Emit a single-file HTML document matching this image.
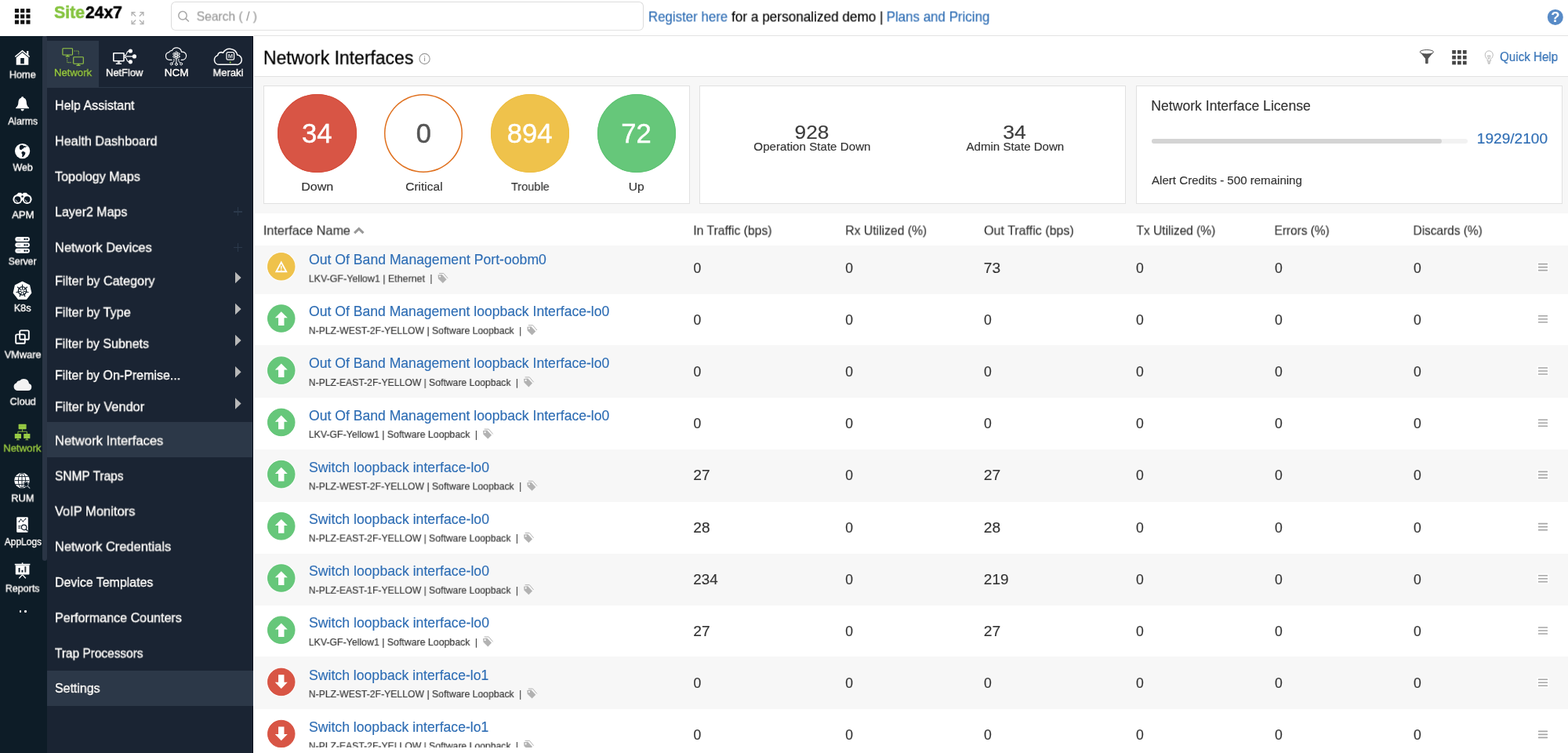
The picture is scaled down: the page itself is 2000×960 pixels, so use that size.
<!DOCTYPE html>
<html lang="en"><head><meta charset="utf-8"><title>Network Interfaces - Site24x7</title>
<style>
*{box-sizing:border-box}
html,body{margin:0;padding:0;overflow:hidden}
body{width:2000px;height:960px;overflow:hidden;position:relative;background:#fff;font-family:"Liberation Sans",sans-serif;color:#333}
.t{position:absolute;white-space:pre;display:block;transform-origin:0 0;will-change:transform;-webkit-text-stroke:0.16px currentColor}
.b{position:absolute;display:block}
svg{position:absolute;display:block;overflow:visible}
.w{color:#fff}
</style></head>
<body>
<!-- top bar -->
<div class="b" style="left:0px;top:0px;width:2000px;height:46px;background:#fff;"></div>
<div class="b" style="left:324px;top:45px;width:1676px;height:1px;background:#e3e3e3;"></div>
<svg style="left:18px;top:11px;" width="21" height="20" viewBox="0 0 21 20"><g transform="translate(0.90 0.10)"><rect x="0.00" y="0.00" width="5.1" height="5.1" fill="#111"/><rect x="7.25" y="0.00" width="5.1" height="5.1" fill="#111"/><rect x="14.50" y="0.00" width="5.1" height="5.1" fill="#111"/><rect x="0.00" y="7.25" width="5.1" height="5.1" fill="#111"/><rect x="7.25" y="7.25" width="5.1" height="5.1" fill="#111"/><rect x="14.50" y="7.25" width="5.1" height="5.1" fill="#111"/><rect x="0.00" y="14.50" width="5.1" height="5.1" fill="#111"/><rect x="7.25" y="14.50" width="5.1" height="5.1" fill="#111"/><rect x="14.50" y="14.50" width="5.1" height="5.1" fill="#111"/></g></svg>
<span class="t" style="left:69px;top:3px;font-size:22.6px;line-height:25px;color:#86c440;transform:translate(0.09px,0.10px) scaleX(0.9397);font-weight:700;-webkit-text-stroke:0.55px #86c440;">Site</span>
<span class="t" style="left:109px;top:3px;font-size:22.6px;line-height:25px;color:#000;transform:translate(0.07px,0.10px) scaleX(0.9281);font-weight:700;-webkit-text-stroke:0.55px #000;">24x7</span>
<svg style="left:167px;top:14px;" width="17" height="18" viewBox="0 0 17 18"><g transform="translate(0.20 0.80) scale(1.0000 1.0000) translate(-0.0 -0.0)"><g fill="none" stroke="#b4b4b4" stroke-width="1.4" stroke-linecap="butt" stroke-linejoin="miter"><path d="M0.9 5.4V0.9H5.4M1.2 1.2L6 6"/><path d="M11.2 0.9H15.7V5.4M15.4 1.2L10.6 6"/><path d="M0.9 11.2V15.7H5.4M1.2 15.4L6 10.6"/><path d="M11.2 15.7H15.7V11.2M15.4 15.4L10.6 10.6"/></g></g></svg>
<div class="b" style="left:218px;top:2px;width:602.5px;height:36.5px;background:#fff;border:1px solid #dcdcdc;border-bottom-color:#e2e2e2;border-radius:6px;"></div>
<svg style="left:227px;top:13px;" width="14" height="15" viewBox="0 0 14 15"><circle cx="6" cy="6.8" r="5.2" fill="none" stroke="#a9a9a9" stroke-width="1.5"/><path d="M9.8 10.6L13.4 14" stroke="#a9a9a9" stroke-width="1.7" stroke-linecap="round"/></svg>
<span class="t" style="left:250px;top:11px;font-size:16.5px;line-height:18px;color:#9a9a9a;transform:translate(0.69px,0.50px) scaleX(0.9470);">Search ( / )</span>
<span class="t" style="left:826px;top:11px;font-size:17.5px;line-height:20px;color:#2e6db4;transform:translate(0.92px,0.50px) scaleX(0.9646);">Register here</span>
<span class="t" style="left:933px;top:11px;font-size:17.5px;line-height:20px;color:#000;transform:translate(0.06px,0.50px) scaleX(0.9813);">for a personalized demo |</span>
<span class="t" style="left:1130px;top:11px;font-size:17.5px;line-height:20px;color:#2e6db4;transform:translate(0.66px,0.50px) scaleX(0.9669);">Plans and Pricing</span>
<svg style="left:1973px;top:11px;will-change:transform;" width="21" height="21" viewBox="0 0 21 21"><g transform="translate(0.80 0.90)"><circle cx="10" cy="10" r="10" fill="#588bc7"/><text x="10" y="16.4" text-anchor="middle" font-family="Liberation Sans, sans-serif" font-weight="700" font-size="18.5" fill="#fff">?</text></g></svg>
<!-- left rail -->
<div class="b" style="left:0px;top:46px;width:60px;height:914px;background:#0d1c27;"></div>
<div class="b" style="left:54px;top:46px;width:6px;height:669px;background:#2a3545;border-radius:2px 2px 3px 3px;"></div>
<svg style="left:18px;top:63px;" width="21" height="20" viewBox="0 0 21 20"><g transform="translate(0.70 0.60)"><path d="M9.8 0.2 L0.2 8.2 L1.1 9.3 L9.8 2.1 L18.5 9.3 L19.4 8.2 L17.6 6.7 V1.4 H15.4 V4.9 Z" fill="#fff"/><path d="M9.8 3.5 L2 9.9 V19.2 H17.6 V9.9 Z M7.5 10.4 H12.1 V17.7 H7.5 Z" fill="#fff" fill-rule="evenodd"/></g></svg>
<span class="t" style="left:11px;top:87px;font-size:13.2px;line-height:15px;color:#fff;transform:translate(0.75px,0.50px) scaleX(0.9684);text-shadow:0 0 1px rgba(0,0,0,.9),0 0 2px rgba(0,0,0,.5);-webkit-text-stroke:0.4px currentColor;">Home</span>
<svg style="left:20px;top:123px;" width="18" height="19" viewBox="0 0 18 19"><path d="M8.6 0.3 C9.6 0.3 10.2 1 10.2 1.8 C12.6 2.6 13.7 4.7 13.8 7.4 C13.9 10.8 14.9 12.6 17 14.2 V15.2 H0.2 V14.2 C2.3 12.6 3.3 10.8 3.4 7.4 C3.5 4.7 4.6 2.6 7 1.8 C7 1 7.6 0.3 8.6 0.3 Z" fill="#fff"/><path d="M6.6 16 H10.6 C10.6 17.4 9.8 18.4 8.6 18.4 C7.4 18.4 6.6 17.4 6.6 16 Z" fill="#fff"/></svg>
<span class="t" style="left:10px;top:146px;font-size:13.2px;line-height:15px;color:#fff;transform:translate(0.28px,0.75px) scaleX(0.9179);text-shadow:0 0 1px rgba(0,0,0,.9),0 0 2px rgba(0,0,0,.5);-webkit-text-stroke:0.4px currentColor;">Alarms</span>
<svg style="left:18px;top:182px;" width="21" height="21" viewBox="0 0 21 21"><g transform="translate(0.70 0.70)"><circle cx="9.9" cy="9.9" r="9.6" fill="#fff"/><path d="M6.4 3.2 L8.2 2 L10.6 2.4 L11.4 3.6 L13 3 L14.8 4.6 L13.4 5.4 L12.2 4.8 L11.6 6.2 L9.6 7.2 L8.6 8.6 L6.8 8 L6 6 Z" fill="#0d1b27"/><path d="M9.4 10.6 L11.6 10.2 L13.8 12 L13.2 14.2 L10.6 17.6 L9.4 17.4 L9.8 14.4 L8.6 12.4 Z" fill="#0d1b27"/><path d="M14.6 2.8 L16 3.6 L15.4 4.6 Z" fill="#0d1b27"/></g></svg>
<span class="t" style="left:16px;top:205px;font-size:13.2px;line-height:15px;color:#fff;transform:translate(0.50px,0.75px) scaleX(0.9404);text-shadow:0 0 1px rgba(0,0,0,.9),0 0 2px rgba(0,0,0,.5);-webkit-text-stroke:0.4px currentColor;">Web</span>
<svg style="left:16px;top:245px;" width="25" height="16" viewBox="0 0 25 16"><g transform="translate(0.20 0.40)"><path d="M7.2 0.3 H10.5 L12.3 1.9 L14.1 0.3 H17.4 L21 4 L12.3 10 L3.6 4 Z" fill="#fff"/><circle cx="6.2" cy="8.6" r="6" fill="#fff"/><circle cx="18.4" cy="8.6" r="6" fill="#fff"/><circle cx="6.2" cy="8.8" r="3.9" fill="#0d1b27"/><circle cx="18.4" cy="8.8" r="3.9" fill="#0d1b27"/><circle cx="12.3" cy="5.1" r="1.25" fill="#0d1b27"/><path d="M3.7 9 A2.6 2.6 0 0 0 6.6 11.5" fill="none" stroke="#fff" stroke-width="0.8"/><path d="M15.9 9 A2.6 2.6 0 0 0 18.8 11.5" fill="none" stroke="#fff" stroke-width="0.8"/></g></svg>
<span class="t" style="left:15px;top:266px;font-size:13.2px;line-height:15px;color:#fff;transform:translate(0.27px,0.25px) scaleX(0.9902);text-shadow:0 0 1px rgba(0,0,0,.9),0 0 2px rgba(0,0,0,.5);-webkit-text-stroke:0.4px currentColor;">APM</span>
<svg style="left:19px;top:301px;" width="20" height="23" viewBox="0 0 20 23"><g transform="translate(0.00 0.60)"><rect x="0.3" y="0.3" width="18.6" height="6" rx="3" fill="#fff"/><rect x="2.8" y="2.9" width="4.4" height="0.9" fill="#9aa3ab"/><circle cx="12.6" cy="3.3" r="1.2" fill="#0d1b27"/><circle cx="15.6" cy="3.3" r="1.2" fill="#0d1b27"/><rect x="0.3" y="7.75" width="18.6" height="6" rx="3" fill="#fff"/><rect x="2.8" y="10.35" width="4.4" height="0.9" fill="#9aa3ab"/><circle cx="12.6" cy="10.75" r="1.2" fill="#0d1b27"/><circle cx="15.6" cy="10.75" r="1.2" fill="#0d1b27"/><rect x="0.3" y="15.200000000000001" width="18.6" height="6" rx="3" fill="#fff"/><rect x="2.8" y="17.8" width="4.4" height="0.9" fill="#9aa3ab"/><circle cx="12.6" cy="18.2" r="1.2" fill="#0d1b27"/><circle cx="15.6" cy="18.2" r="1.2" fill="#0d1b27"/></g></svg>
<span class="t" style="left:10px;top:325px;font-size:13.2px;line-height:15px;color:#fff;transform:translate(0.75px,0.50px) scaleX(0.9192);text-shadow:0 0 1px rgba(0,0,0,.9),0 0 2px rgba(0,0,0,.5);-webkit-text-stroke:0.4px currentColor;">Server</span>
<svg style="left:16px;top:358px;" width="25" height="25" viewBox="0 0 25 25"><g transform="translate(0.50 0.20)"><polygon points="12.00,1.20 20.99,5.53 23.21,15.26 16.99,23.06 7.01,23.06 0.79,15.26 3.01,5.53" fill="#fff" stroke="#fff" stroke-width="1.2" stroke-linejoin="round"/><circle cx="12" cy="12.7" r="5.2" fill="none" stroke="#0d1b27" stroke-width="1.3"/><line x1="12.00" y1="11.40" x2="12.00" y2="4.50" stroke="#0d1b27" stroke-width="1.1"/><line x1="13.02" y1="11.89" x2="18.41" y2="7.59" stroke="#0d1b27" stroke-width="1.1"/><line x1="13.27" y1="12.99" x2="19.99" y2="14.52" stroke="#0d1b27" stroke-width="1.1"/><line x1="12.56" y1="13.87" x2="15.56" y2="20.09" stroke="#0d1b27" stroke-width="1.1"/><line x1="11.44" y1="13.87" x2="8.44" y2="20.09" stroke="#0d1b27" stroke-width="1.1"/><line x1="10.73" y1="12.99" x2="4.01" y2="14.52" stroke="#0d1b27" stroke-width="1.1"/><line x1="10.98" y1="11.89" x2="5.59" y2="7.59" stroke="#0d1b27" stroke-width="1.1"/><circle cx="12" cy="12.7" r="1" fill="#fff"/></g></svg>
<span class="t" style="left:17px;top:385px;font-size:13.2px;line-height:15px;color:#fff;transform:translate(0.77px,0.00px) scaleX(0.9544);text-shadow:0 0 1px rgba(0,0,0,.9),0 0 2px rgba(0,0,0,.5);-webkit-text-stroke:0.4px currentColor;">K8s</span>
<svg style="left:19px;top:420px;" width="19" height="19" viewBox="0 0 19 19"><g transform="translate(0.60 0.40)"><rect x="5.6" y="1" width="11.6" height="11.4" rx="1.6" fill="none" stroke="#fff" stroke-width="1.9"/><rect x="0.6" y="6" width="11.6" height="11.4" rx="1.6" fill="none" stroke="#fff" stroke-width="1.9"/></g></svg>
<span class="t" style="left:5px;top:444px;font-size:13.2px;line-height:15px;color:#fff;transform:translate(0.74px,0.50px) scaleX(0.9681);text-shadow:0 0 1px rgba(0,0,0,.9),0 0 2px rgba(0,0,0,.5);-webkit-text-stroke:0.4px currentColor;">VMware</span>
<svg style="left:16px;top:481px;" width="25" height="18" viewBox="0 0 25 18"><g transform="translate(0.60 0.60)"><path d="M5.4 16.4 A5 5 0 0 1 4.4 6.7 A4.4 4.4 0 0 1 8.6 3.6 A6.8 6.8 0 0 1 20.4 7.4 A4.6 4.6 0 0 1 19.2 16.4 Z" fill="#f3f3f3"/></g></svg>
<span class="t" style="left:12px;top:504px;font-size:13.2px;line-height:15px;color:#fff;transform:translate(0.65px,0.25px) scaleX(0.9625);text-shadow:0 0 1px rgba(0,0,0,.9),0 0 2px rgba(0,0,0,.5);-webkit-text-stroke:0.4px currentColor;">Cloud</span>
<svg style="left:18px;top:540px;" width="21" height="22" viewBox="0 0 21 22"><g transform="translate(0.60 0.40)"><rect x="5" y="0.4" width="10" height="6.4" rx="0.6" fill="#98cb45"/><rect x="5.8" y="2.4" width="8.4" height="0.7" fill="#7fae37"/><rect x="0.2" y="12.6" width="8.2" height="6" rx="0.6" fill="#98cb45"/><rect x="11.6" y="12.6" width="8.2" height="6" rx="0.6" fill="#98cb45"/><path d="M10 6.8 V9.8 M4.3 12.6 V9.8 H15.7 V12.6" fill="none" stroke="#98cb45" stroke-width="0.9"/><path d="M4.3 18.6 V20 M2.4 20.3 H6.2 M15.7 18.6 V20 M13.8 20.3 H17.6" fill="none" stroke="#98cb45" stroke-width="1"/></g></svg>
<span class="t" style="left:4px;top:563px;font-size:13.2px;line-height:15px;color:#98cb45;transform:translate(0.22px,0.75px) scaleX(0.9979);text-shadow:0 0 1px rgba(0,0,0,.9),0 0 2px rgba(0,0,0,.5);-webkit-text-stroke:0.4px currentColor;">Network</span>
<svg style="left:18px;top:602px;" width="21" height="22" viewBox="0 0 21 22"><g transform="translate(0.00 0.40)"><circle cx="10" cy="10.2" r="9.8" fill="#fff"/><g fill="none" stroke="#0d1b27" stroke-width="0.9"><ellipse cx="10" cy="10.2" rx="4.6" ry="9.6"/><path d="M10 0.6 V19.8 M0.4 10.2 H19.6 M1.8 5.2 H18.2 M1.8 15.2 H18.2"/></g><circle cx="15.2" cy="15" r="3.6" fill="#0d1b27"/><circle cx="15.2" cy="15" r="3" fill="none" stroke="#b8bec4" stroke-width="0.9"/><path d="M17.4 17.4 L20.2 20.2" stroke="#b8bec4" stroke-width="1.2"/></g></svg>
<span class="t" style="left:14px;top:627px;font-size:13.2px;line-height:15px;color:#fff;transform:translate(0.24px,0.50px) scaleX(0.9761);text-shadow:0 0 1px rgba(0,0,0,.9),0 0 2px rgba(0,0,0,.5);-webkit-text-stroke:0.4px currentColor;">RUM</span>
<svg style="left:20px;top:658px;" width="17" height="22" viewBox="0 0 17 22"><g transform="translate(0.80 0.80)"><rect x="0.4" y="0.4" width="14.6" height="19.6" rx="1.2" fill="#fff"/><path d="M3.4 6.4 L5.8 3.4 L8.6 6 L11.8 2.6" fill="none" stroke="#0d1b27" stroke-width="0.9"/><circle cx="3.6" cy="6.3" r="0.8" fill="#0d1b27"/><circle cx="5.8" cy="3.5" r="0.8" fill="#0d1b27"/><circle cx="8.6" cy="6" r="0.8" fill="#0d1b27"/><circle cx="11.8" cy="2.8" r="0.8" fill="#0d1b27"/><path d="M2.4 11.6 H5.8 M2.4 13.1 H5.2 M2.4 14.6 H5.6" stroke="#0d1b27" stroke-width="0.7"/><circle cx="9.8" cy="13.6" r="3.2" fill="#fff" stroke="#0d1b27" stroke-width="1.2"/><path d="M12.2 16 L14.8 18.4" stroke="#0d1b27" stroke-width="1.3"/></g></svg>
<span class="t" style="left:5px;top:683px;font-size:13.2px;line-height:15px;color:#fff;transform:translate(0.78px,0.00px) scaleX(0.9058);text-shadow:0 0 1px rgba(0,0,0,.9),0 0 2px rgba(0,0,0,.5);-webkit-text-stroke:0.4px currentColor;">AppLogs</span>
<svg style="left:18px;top:717px;" width="21" height="21" viewBox="0 0 21 21"><g transform="translate(0.60 0.40)"><rect x="0.2" y="1.4" width="19.6" height="1.6" fill="#fff"/><rect x="9.2" y="0" width="1.6" height="2" fill="#fff"/><path d="M1.2 3 H18.8 V14 Q18.8 15.2 17.6 15.2 H2.4 Q1.2 15.2 1.2 14 Z" fill="#fff"/><rect x="5" y="6.6" width="1.9" height="5.6" fill="#0d1b27"/><rect x="8.9" y="9.4" width="1.9" height="2.8" fill="#0d1b27"/><rect x="12.8" y="4.8" width="1.9" height="7.4" fill="#30383f"/><path d="M10 15.2 L5.8 19.8 M10 15.2 L14.2 19.8" stroke="#fff" stroke-width="1.3" fill="none"/></g></svg>
<span class="t" style="left:6px;top:742px;font-size:13.2px;line-height:15px;color:#fff;transform:translate(0.78px,0.50px) scaleX(0.9459);text-shadow:0 0 1px rgba(0,0,0,.9),0 0 2px rgba(0,0,0,.5);-webkit-text-stroke:0.4px currentColor;">Reports</span>
<div class="b" style="left:24.6px;top:778px;width:2.6px;height:2.6px;background:#fff;border-radius:50%;"></div>
<div class="b" style="left:31px;top:778px;width:2.6px;height:2.6px;background:#fff;border-radius:50%;"></div>
<!-- sidebar -->
<div class="b" style="left:60px;top:46px;width:263.3px;height:914px;background:#1a2433;"></div>
<div class="b" style="left:60px;top:52.3px;width:66px;height:58.5px;background:#2c3848;"></div>
<div class="b" style="left:60px;top:110.5px;width:263.3px;height:1.3px;background:#2b3747;"></div>
<svg style="left:79px;top:61px;" width="29" height="24" viewBox="0 0 29 24"><g transform="translate(0.10 0.00)"><g fill="none" stroke="#98cb45" stroke-width="1.1"><rect x="0.8" y="0.8" width="12.6" height="8.2" rx="0.8"/><rect x="14.6" y="11.8" width="12.6" height="8.4" rx="0.8"/><path d="M7.1 9 V10.4 M4.6 10.9 H9.6 M20.9 20.2 V21.8 M18.4 22.4 H23.4" stroke-width="1.3"/><path d="M15.4 4 H21.2 V9.4" stroke-dasharray="1.1 1.1"/><path d="M6.6 13 V18.6 H12.4" stroke-dasharray="1.1 1.1"/></g></g></svg>
<span class="t" style="left:68px;top:85px;font-size:13.2px;line-height:15px;color:#98cb45;transform:translate(0.98px,0.00px) scaleX(0.9926);text-shadow:0 0 1px rgba(0,0,0,.9),0 0 2px rgba(0,0,0,.5);-webkit-text-stroke:0.4px currentColor;">Network</span>
<svg style="left:143px;top:63px;" width="31" height="20" viewBox="0 0 31 20"><g transform="translate(0.60 0.10)"><g fill="none" stroke="#fff"><rect x="1.2" y="4.6" width="13.2" height="10" rx="0.5" stroke-width="1.6"/><path d="M15.2 8.8 H25.6" stroke-width="1.5" opacity="0.85"/><path d="M15.2 7.3 H16.2 C18.6 7.3 17.6 1.9 20.6 1.9 M15.2 10.3 H16.2 C18.6 10.3 17.6 15.7 20.6 15.7" stroke-width="1.1"/><path d="M7.8 15.4 V17.4" stroke-width="3"/><path d="M4.2 18.2 H11.4" stroke-width="1.4"/></g><circle cx="22.8" cy="1.9" r="2.6" fill="#fff"/><circle cx="27.8" cy="8.8" r="2.6" fill="#fff"/><circle cx="22.8" cy="15.7" r="2.6" fill="#fff"/></g></svg>
<span class="t" style="left:134px;top:85px;font-size:13.2px;line-height:15px;color:#fff;transform:translate(0.99px,0.00px) scaleX(0.9817);text-shadow:0 0 1px rgba(0,0,0,.9),0 0 2px rgba(0,0,0,.5);-webkit-text-stroke:0.4px currentColor;">NetFlow</span>
<svg style="left:210px;top:60px;" width="30" height="24" viewBox="0 0 30 24"><g transform="translate(0.20 0.50) scale(0.9800 0.9792) translate(-0.0 -0.0)"><g fill="none" stroke="#fff" stroke-width="1.2" stroke-linecap="round"><path d="M9 16.2 H6 A5 5 0 0 1 5.4 6.3 A4.4 4.4 0 0 1 9.4 4 A6.6 6.6 0 0 1 21.8 5.8 A5.2 5.2 0 0 1 23.6 16.2 H21.4"/><path d="M15 14.6 V20 M12 15.2 V17.6 Q12 18.6 11 19 L9.8 19.8 M18 15.2 V17.6 Q18 18.6 19 19 L20.2 19.8" stroke-width="1"/><circle cx="8.6" cy="21.4" r="1.5" stroke-width="1"/><circle cx="15" cy="21.8" r="1.5" stroke-width="1"/><circle cx="21.4" cy="21.4" r="1.5" stroke-width="1"/><circle cx="15" cy="10.2" r="1.5" stroke-width="1"/><circle cx="17.94" cy="11.90" r="1.35" stroke-width="0.9"/><circle cx="15.00" cy="13.60" r="1.35" stroke-width="0.9"/><circle cx="12.06" cy="11.90" r="1.35" stroke-width="0.9"/><circle cx="12.06" cy="8.50" r="1.35" stroke-width="0.9"/><circle cx="15.00" cy="6.80" r="1.35" stroke-width="0.9"/><circle cx="17.94" cy="8.50" r="1.35" stroke-width="0.9"/></g></g></svg>
<span class="t" style="left:209px;top:85px;font-size:13.2px;line-height:15px;color:#fff;transform:translate(0.68px,0.00px) scaleX(1.0299);text-shadow:0 0 1px rgba(0,0,0,.9),0 0 2px rgba(0,0,0,.5);-webkit-text-stroke:0.4px currentColor;">NCM</span>
<svg style="left:273px;top:61px;will-change:transform;" width="36" height="23" viewBox="0 0 36 23"><g transform="translate(0.10 0.60)"><g fill="none" stroke="#fff" stroke-width="1.5" stroke-linejoin="round"><path d="M6.6 20.75 A6.1 6.1 0 0 1 4.6 8.84 A4.4 4.4 0 0 1 11.4 5.8 A9.8 9.8 0 0 1 29.6 8.5 A6.15 6.15 0 0 1 28.4 20.75 Z"/><rect x="15.9" y="5" width="9.6" height="9.6" rx="1.9" stroke-width="1.2"/></g><text x="20.7" y="12.5" text-anchor="middle" font-family="Liberation Sans, sans-serif" font-size="7.6" font-weight="700" fill="#d0d4d8">M</text><circle cx="20.6" cy="17.9" r="1" fill="#8ed13c"/></g></svg>
<span class="t" style="left:271px;top:85px;font-size:13.2px;line-height:15px;color:#fff;transform:translate(0.49px,0.00px) scaleX(0.9828);text-shadow:0 0 1px rgba(0,0,0,.9),0 0 2px rgba(0,0,0,.5);-webkit-text-stroke:0.4px currentColor;">Meraki</span>
<div class="b" style="left:60px;top:538px;width:263.3px;height:45px;background:#2c3848;"></div>
<div class="b" style="left:322.2px;top:46px;width:1px;height:914px;background:#070e1a;"></div>
<div class="b" style="left:60px;top:46px;width:263.3px;height:1px;background:#0a1220;"></div>
<div class="b" style="left:60px;top:855px;width:263.3px;height:44.5px;background:#2c3848;"></div>
<span class="t" style="left:70px;top:125px;font-size:16.9px;line-height:19px;color:#fff;transform:translate(0.02px,0.00px) scaleX(0.9480);text-shadow:0 0 1px rgba(0,0,0,.9),0 0 2px rgba(0,0,0,.5);-webkit-text-stroke:0.4px currentColor;">Help Assistant</span>
<span class="t" style="left:70px;top:170px;font-size:16.9px;line-height:19px;color:#fff;transform:translate(0.01px,0.50px) scaleX(0.9588);text-shadow:0 0 1px rgba(0,0,0,.9),0 0 2px rgba(0,0,0,.5);-webkit-text-stroke:0.4px currentColor;">Health Dashboard</span>
<span class="t" style="left:69px;top:215px;font-size:16.9px;line-height:19px;color:#fff;transform:translate(0.97px,0.75px) scaleX(0.9583);text-shadow:0 0 1px rgba(0,0,0,.9),0 0 2px rgba(0,0,0,.5);-webkit-text-stroke:0.4px currentColor;">Topology Maps</span>
<span class="t" style="left:70px;top:260px;font-size:16.9px;line-height:19px;color:#fff;transform:translate(0.03px,0.75px) scaleX(0.9453);text-shadow:0 0 1px rgba(0,0,0,.9),0 0 2px rgba(0,0,0,.5);-webkit-text-stroke:0.4px currentColor;">Layer2 Maps</span>
<div class="b" style="left:298px;top:269.34999999999997px;width:11px;height:1.2px;background:#2b394b;"></div>
<div class="b" style="left:302.9px;top:264.45px;width:1.2px;height:11px;background:#2b394b;"></div>
<span class="t" style="left:69px;top:306px;font-size:16.9px;line-height:19px;color:#fff;transform:translate(0.98px,0.25px) scaleX(0.9775);text-shadow:0 0 1px rgba(0,0,0,.9),0 0 2px rgba(0,0,0,.5);-webkit-text-stroke:0.4px currentColor;">Network Devices</span>
<div class="b" style="left:298px;top:314.84999999999997px;width:11px;height:1.2px;background:#2b394b;"></div>
<div class="b" style="left:302.9px;top:309.95px;width:1.2px;height:11px;background:#2b394b;"></div>
<span class="t" style="left:70px;top:348px;font-size:16.9px;line-height:19px;color:#fff;transform:translate(0.01px,0.75px) scaleX(0.9567);text-shadow:0 0 1px rgba(0,0,0,.9),0 0 2px rgba(0,0,0,.5);-webkit-text-stroke:0.4px currentColor;">Filter by Category</span>
<svg style="left:300px;top:346px;" width="8" height="16" viewBox="0 0 8 16"><g transform="translate(0.00 0.85)"><path d="M0 0 L7.6 7.2 L0 14.4 Z" fill="#b9b9b9"/></g></svg>
<span class="t" style="left:70px;top:388px;font-size:16.9px;line-height:19px;color:#fff;transform:translate(0.01px,0.75px) scaleX(0.9564);text-shadow:0 0 1px rgba(0,0,0,.9),0 0 2px rgba(0,0,0,.5);-webkit-text-stroke:0.4px currentColor;">Filter by Type</span>
<svg style="left:300px;top:386px;" width="8" height="16" viewBox="0 0 8 16"><g transform="translate(0.00 0.85)"><path d="M0 0 L7.6 7.2 L0 14.4 Z" fill="#b9b9b9"/></g></svg>
<span class="t" style="left:70px;top:428px;font-size:16.9px;line-height:19px;color:#fff;transform:translate(0.02px,0.75px) scaleX(0.9473);text-shadow:0 0 1px rgba(0,0,0,.9),0 0 2px rgba(0,0,0,.5);-webkit-text-stroke:0.4px currentColor;">Filter by Subnets</span>
<svg style="left:300px;top:426px;" width="8" height="16" viewBox="0 0 8 16"><g transform="translate(0.00 0.85)"><path d="M0 0 L7.6 7.2 L0 14.4 Z" fill="#b9b9b9"/></g></svg>
<span class="t" style="left:70px;top:469px;font-size:16.9px;line-height:19px;color:#fff;transform:translate(0.02px,0.00px) scaleX(0.9482);text-shadow:0 0 1px rgba(0,0,0,.9),0 0 2px rgba(0,0,0,.5);-webkit-text-stroke:0.4px currentColor;">Filter by On-Premise...</span>
<svg style="left:300px;top:467px;" width="8" height="15" viewBox="0 0 8 15"><g transform="translate(0.00 0.10)"><path d="M0 0 L7.6 7.2 L0 14.4 Z" fill="#b9b9b9"/></g></svg>
<span class="t" style="left:70px;top:509px;font-size:16.9px;line-height:19px;color:#fff;transform:translate(0.00px,0.25px) scaleX(0.9639);text-shadow:0 0 1px rgba(0,0,0,.9),0 0 2px rgba(0,0,0,.5);-webkit-text-stroke:0.4px currentColor;">Filter by Vendor</span>
<svg style="left:300px;top:507px;" width="8" height="15" viewBox="0 0 8 15"><g transform="translate(0.00 0.35)"><path d="M0 0 L7.6 7.2 L0 14.4 Z" fill="#b9b9b9"/></g></svg>
<span class="t" style="left:69px;top:552px;font-size:16.9px;line-height:19px;color:#fff;transform:translate(0.97px,0.50px) scaleX(0.9827);text-shadow:0 0 1px rgba(0,0,0,.9),0 0 2px rgba(0,0,0,.5);-webkit-text-stroke:0.4px currentColor;">Network Interfaces</span>
<span class="t" style="left:70px;top:597px;font-size:16.9px;line-height:19px;color:#fff;transform:translate(0.01px,0.50px) scaleX(0.9168);text-shadow:0 0 1px rgba(0,0,0,.9),0 0 2px rgba(0,0,0,.5);-webkit-text-stroke:0.4px currentColor;">SNMP Traps</span>
<span class="t" style="left:69px;top:642px;font-size:16.9px;line-height:19px;color:#fff;transform:translate(0.95px,0.50px) scaleX(0.9762);text-shadow:0 0 1px rgba(0,0,0,.9),0 0 2px rgba(0,0,0,.5);-webkit-text-stroke:0.4px currentColor;">VoIP Monitors</span>
<span class="t" style="left:69px;top:687px;font-size:16.9px;line-height:19px;color:#fff;transform:translate(0.99px,0.50px) scaleX(0.9739);text-shadow:0 0 1px rgba(0,0,0,.9),0 0 2px rgba(0,0,0,.5);-webkit-text-stroke:0.4px currentColor;">Network Credentials</span>
<span class="t" style="left:70px;top:733px;font-size:16.9px;line-height:19px;color:#fff;transform:translate(0.03px,0.00px) scaleX(0.9418);text-shadow:0 0 1px rgba(0,0,0,.9),0 0 2px rgba(0,0,0,.5);-webkit-text-stroke:0.4px currentColor;">Device Templates</span>
<span class="t" style="left:70px;top:778px;font-size:16.9px;line-height:19px;color:#fff;transform:translate(0.02px,0.25px) scaleX(0.9523);text-shadow:0 0 1px rgba(0,0,0,.9),0 0 2px rgba(0,0,0,.5);-webkit-text-stroke:0.4px currentColor;">Performance Counters</span>
<span class="t" style="left:69px;top:823px;font-size:16.9px;line-height:19px;color:#fff;transform:translate(0.98px,0.50px) scaleX(0.9132);text-shadow:0 0 1px rgba(0,0,0,.9),0 0 2px rgba(0,0,0,.5);-webkit-text-stroke:0.4px currentColor;">Trap Processors</span>
<span class="t" style="left:69px;top:868px;font-size:16.9px;line-height:19px;color:#fff;transform:translate(0.99px,0.00px) scaleX(0.9435);text-shadow:0 0 1px rgba(0,0,0,.9),0 0 2px rgba(0,0,0,.5);-webkit-text-stroke:0.4px currentColor;">Settings</span>
<!-- page header -->
<span class="t" style="left:335px;top:60px;font-size:23.5px;line-height:26px;color:#000;transform:translate(0.92px,0.80px) scaleX(0.9771);-webkit-text-stroke:0.3px #000;">Network Interfaces</span>
<svg style="left:534px;top:67px;" width="16" height="16" viewBox="0 0 16 16"><g transform="translate(0.00 0.40)"><circle cx="7.6" cy="7.6" r="6.6" fill="none" stroke="#9a9a9a" stroke-width="1.1"/><rect x="7.05" y="6.0" width="1.1" height="4.6" fill="#9a9a9a"/><rect x="7.05" y="3.8" width="1.1" height="1.2" fill="#9a9a9a"/></g></svg>
<svg style="left:1810px;top:63px;" width="19" height="19" viewBox="0 0 19 19"><g transform="translate(0.75 0.25)"><path d="M0.4 3 L7.3 11.6 V17 Q7.3 17.9 8.2 17.9 H10 Q10.9 17.9 10.9 17 V11.6 L17.8 3 Z" fill="#555"/><ellipse cx="9.1" cy="3" rx="8.6" ry="2.7" fill="#fff" stroke="#444" stroke-width="0.9"/></g></svg>
<svg style="left:1852px;top:64px;" width="19" height="19" viewBox="0 0 19 19"><g transform="translate(0.20 0.00)"><rect x="0.00" y="0.00" width="4.7" height="4.7" fill="#454545"/><rect x="6.85" y="0.00" width="4.7" height="4.7" fill="#454545"/><rect x="13.70" y="0.00" width="4.7" height="4.7" fill="#454545"/><rect x="0.00" y="6.85" width="4.7" height="4.7" fill="#454545"/><rect x="6.85" y="6.85" width="4.7" height="4.7" fill="#454545"/><rect x="13.70" y="6.85" width="4.7" height="4.7" fill="#454545"/><rect x="0.00" y="13.70" width="4.7" height="4.7" fill="#454545"/><rect x="6.85" y="13.70" width="4.7" height="4.7" fill="#454545"/><rect x="13.70" y="13.70" width="4.7" height="4.7" fill="#454545"/></g></svg>
<svg style="left:1893px;top:64px;" width="12" height="18" viewBox="0 0 12 18"><g transform="translate(0.75 0.25)"><g fill="none" stroke="#b0b0b0" stroke-width="0.9"><path d="M3.4 11.4 C1.6 9.6 0.5 7.8 0.5 5.6 A5 5 0 0 1 10.5 5.6 C10.5 7.8 9.4 9.6 7.6 11.4 V13.6 H3.4 Z"/><path d="M3.6 14.8H7.4M3.9 16H7.1M4.6 17.1H6.4"/><path d="M4 6.6 L4.9 11.3 M7 6.6 L6.1 11.3 M3.6 6.8 H7.4"/></g></g></svg>
<span class="t" style="left:1913px;top:63px;font-size:16.5px;line-height:18px;color:#2e6db4;transform:translate(0.08px,0.00px) scaleX(0.9177);">Quick Help</span>
<div class="b" style="left:324px;top:97px;width:1676px;height:1px;background:#e2e2e2;"></div>
<!-- summary -->
<div class="b" style="left:324px;top:98px;width:1676px;height:174px;background:#f7f7f7;"></div>
<div class="b" style="left:336.2px;top:109.2px;width:543.6px;height:150.5px;background:#fff;border:1px solid #e1e1e1;"></div>
<div class="b" style="left:892.2px;top:109.2px;width:544.2px;height:150.5px;background:#fff;border:1px solid #e1e1e1;"></div>
<div class="b" style="left:1449px;top:109.2px;width:544.2px;height:150.5px;background:#fff;border:1px solid #e1e1e1;"></div>
<div class="b" style="left:354.4px;top:119.7px;width:100.2px;height:100.2px;background:#d85545;border-radius:50%;box-shadow:inset 0 0 0 1px #d44a38;"></div>
<span class="t" style="left:385px;top:151px;font-size:34.6px;line-height:38px;color:#fff;transform:translate(0.12px,0.40px);-webkit-text-stroke:0.45px #fff;">34</span>
<span class="t" style="left:384px;top:229px;font-size:15.4px;line-height:17px;color:#333;transform:translate(0.23px,0.00px) scaleX(1.0436);">Down</span>
<div class="b" style="left:490.29999999999995px;top:119.7px;width:100.2px;height:100.2px;background:#fff;border-radius:50%;box-shadow:inset 0 0 0 1.5px #e0711f;"></div>
<span class="t" style="left:530px;top:151px;font-size:34.6px;line-height:38px;color:#555;transform:translate(0.78px,0.40px);-webkit-text-stroke:0.45px #555;">0</span>
<span class="t" style="left:517px;top:229px;font-size:15.4px;line-height:17px;color:#333;transform:translate(0.29px,0.00px) scaleX(1.0052);">Critical</span>
<div class="b" style="left:625.6999999999999px;top:119.7px;width:100.2px;height:100.2px;background:#efc24b;border-radius:50%;box-shadow:inset 0 0 0 1px #edbd40;"></div>
<span class="t" style="left:646px;top:151px;font-size:34.6px;line-height:38px;color:#fff;transform:translate(0.71px,0.40px);-webkit-text-stroke:0.45px #fff;">894</span>
<span class="t" style="left:651px;top:229px;font-size:15.4px;line-height:17px;color:#333;transform:translate(0.90px,0.00px) scaleX(0.9480);">Trouble</span>
<div class="b" style="left:761.5px;top:119.7px;width:100.2px;height:100.2px;background:#66c77a;border-radius:50%;box-shadow:inset 0 0 0 1px #5cc271;"></div>
<span class="t" style="left:792px;top:151px;font-size:34.6px;line-height:38px;color:#fff;transform:translate(0.35px,0.40px);-webkit-text-stroke:0.45px #fff;">72</span>
<span class="t" style="left:801px;top:229px;font-size:15.4px;line-height:17px;color:#333;transform:translate(0.69px,0.00px) scaleX(1.0202);">Up</span>
<span class="t" style="left:1013px;top:155px;font-size:24.8px;line-height:27px;color:#3c3c3c;transform:translate(0.54px,0.00px) scaleX(1.0592);">928</span>
<span class="t" style="left:961px;top:179px;font-size:14.4px;line-height:16px;color:#333;transform:translate(0.36px,0.00px) scaleX(1.0534);">Operation State Down</span>
<span class="t" style="left:1279px;top:155px;font-size:24.8px;line-height:27px;color:#3c3c3c;transform:translate(0.29px,0.00px) scaleX(1.0691);">34</span>
<span class="t" style="left:1232px;top:179px;font-size:14.4px;line-height:16px;color:#333;transform:translate(0.52px,0.00px) scaleX(1.0464);">Admin State Down</span>
<span class="t" style="left:1468px;top:125px;font-size:17.6px;line-height:20px;color:#333;transform:translate(0.35px,0.25px);">Network Interface License</span>
<div class="b" style="left:1469px;top:177px;width:402.75px;height:6.2px;background:#f2f2f2;border-radius:3.1px;"></div>
<div class="b" style="left:1469px;top:177px;width:369.75px;height:6.2px;background:#d4d4d4;border-radius:3.1px;"></div>
<span class="t" style="left:1883px;top:167px;font-size:18px;line-height:20px;color:#2e6db4;transform:translate(0.85px,0.00px) scaleX(1.0595);">1929/2100</span>
<span class="t" style="left:1469px;top:221px;font-size:14.4px;line-height:16px;color:#333;transform:translate(0.07px,0.50px) scaleX(1.0472);">Alert Credits - 500 remaining</span>
<!-- table -->
<span class="t" style="left:335px;top:284px;font-size:16.5px;line-height:18px;color:#333;transform:translate(0.80px,0.50px) scaleX(0.9856);">Interface Name</span>
<svg style="left:451px;top:289px;" width="14" height="10" viewBox="0 0 14 10"><g transform="translate(0.00 0.50)"><path d="M0 6.6 L6.8 0 L13.6 6.6 L11.4 8.8 L6.8 4.3 L2.2 8.8 Z" fill="#999"/></g></svg>
<span class="t" style="left:884px;top:284px;font-size:16.5px;line-height:18px;color:#333;transform:translate(0.35px,0.50px) scaleX(0.9519);">In Traffic (bps)</span>
<span class="t" style="left:1078px;top:284px;font-size:16.5px;line-height:18px;color:#333;transform:translate(0.26px,0.50px) scaleX(0.9530);">Rx Utilized (%)</span>
<span class="t" style="left:1255px;top:284px;font-size:16.5px;line-height:18px;color:#333;transform:translate(0.04px,0.50px) scaleX(0.9719);">Out Traffic (bps)</span>
<span class="t" style="left:1449px;top:284px;font-size:16.5px;line-height:18px;color:#333;transform:translate(0.45px,0.50px) scaleX(0.9408);">Tx Utilized (%)</span>
<span class="t" style="left:1625px;top:284px;font-size:16.5px;line-height:18px;color:#333;transform:translate(0.54px,0.50px) scaleX(0.9315);">Errors (%)</span>
<span class="t" style="left:1802px;top:284px;font-size:16.5px;line-height:18px;color:#333;transform:translate(0.54px,0.50px) scaleX(0.9332);">Discards (%)</span>
<div class="b" style="left:325px;top:313px;width:1675px;height:62px;background:#f7f7f7;"></div>
<svg style="left:338px;top:319px;" width="41" height="41" viewBox="0 0 41 41"><g transform="translate(0.75 0.80)"><circle cx="20" cy="20" r="18.8" fill="#fff" opacity="0.75"/><circle cx="20" cy="20" r="17.3" fill="#efc24b" stroke="#ecbb3c" stroke-width="0.8"/><path d="M20 14.6 L26.4 26.4 H13.6 Z" fill="none" stroke="#fff" stroke-width="1.9" stroke-linejoin="miter"/><rect x="19.3" y="19" width="1.4" height="3.9" fill="#fff"/><rect x="19.3" y="23.7" width="1.4" height="1.3" fill="#fff"/></g></svg>
<span class="t" style="left:393px;top:321px;font-size:17.6px;line-height:20px;color:#2e6db4;transform:translate(0.96px,0.05px) scaleX(1.0026);text-shadow:0 0 1.5px #fff;">Out Of Band Management Port-oobm0</span>
<span class="t" style="left:393px;top:347px;font-size:13.2px;line-height:15px;color:#333;transform:translate(0.68px,0.50px) scaleX(0.9458);text-shadow:0 0 1.5px #fff;">LKV-GF-Yellow1 | Ethernet</span>
<span class="t" style="left:548px;top:347px;font-size:13.2px;line-height:15px;color:#444;transform:translate(0.27px,0.30px);-webkit-text-stroke:0;">|</span>
<svg style="left:558px;top:347px;" width="14" height="15" viewBox="0 0 14 15"><g transform="translate(0.15 0.60)"><path d="M0.5 2.9 L5.6 2.4 L11.4 8.6 L6.7 13.4 L0.8 7.6 Z" fill="#b2b2b2"/><circle cx="3" cy="4.9" r="1.1" fill="#fff"/><path d="M2 0.9 L7.7 0.9 L13 7.2" fill="none" stroke="#b2b2b2" stroke-width="1"/></g></svg>
<span class="t" style="left:884px;top:331px;font-size:17.6px;line-height:20px;color:#333;transform:translate(0.61px,0.65px);text-shadow:0 0 1.5px #fff;">0</span>
<span class="t" style="left:1078px;top:331px;font-size:17.6px;line-height:20px;color:#333;transform:translate(0.36px,0.65px);text-shadow:0 0 1.5px #fff;">0</span>
<span class="t" style="left:1254px;top:331px;font-size:17.6px;line-height:20px;color:#333;transform:translate(0.82px,0.65px) scaleX(1.0898);text-shadow:0 0 1.5px #fff;">73</span>
<span class="t" style="left:1449px;top:331px;font-size:17.6px;line-height:20px;color:#333;transform:translate(0.11px,0.65px);text-shadow:0 0 1.5px #fff;">0</span>
<span class="t" style="left:1626px;top:331px;font-size:17.6px;line-height:20px;color:#333;transform:translate(0.11px,0.65px);text-shadow:0 0 1.5px #fff;">0</span>
<span class="t" style="left:1803px;top:331px;font-size:17.6px;line-height:20px;color:#333;transform:translate(0.11px,0.65px);text-shadow:0 0 1.5px #fff;">0</span>
<svg style="left:1961px;top:335px;" width="14" height="11" viewBox="0 0 14 11"><g transform="translate(0.90 0.80)"><rect x="-1.6" y="-1.8" width="15.4" height="13.2" rx="2" fill="#fff" opacity="0.75"/><rect x="0" y="0" width="12.2" height="1.6" rx="0.6" fill="#a6a6a6"/><rect x="0" y="4" width="12.2" height="1.6" rx="0.6" fill="#a6a6a6"/><rect x="0" y="8" width="12.2" height="1.6" rx="0.6" fill="#a6a6a6"/></g></svg>
<svg style="left:338px;top:386px;" width="41" height="40" viewBox="0 0 41 40"><g transform="translate(0.75 0.00)"><circle cx="20" cy="20" r="18.8" fill="#fff" opacity="0.75"/><circle cx="20" cy="20" r="17.3" fill="#66c77a" stroke="#58c06d" stroke-width="0.8"/><path d="M20 11.2 L28 19.3 H23.7 V28.9 H16.3 V19.3 H12 Z" fill="#fff"/></g></svg>
<span class="t" style="left:393px;top:387px;font-size:17.6px;line-height:20px;color:#2e6db4;transform:translate(0.97px,0.25px);text-shadow:0 0 1.5px #fff;">Out Of Band Management loopback Interface-lo0</span>
<span class="t" style="left:393px;top:413px;font-size:13.2px;line-height:15px;color:#333;transform:translate(0.70px,0.70px) scaleX(0.9269);text-shadow:0 0 1.5px #fff;">N-PLZ-WEST-2F-YELLOW | Software Loopback</span>
<span class="t" style="left:662px;top:413px;font-size:13.2px;line-height:15px;color:#444;transform:translate(0.02px,0.50px);-webkit-text-stroke:0;">|</span>
<svg style="left:671px;top:413px;" width="15" height="15" viewBox="0 0 15 15"><g transform="translate(0.90 0.80)"><path d="M0.5 2.9 L5.6 2.4 L11.4 8.6 L6.7 13.4 L0.8 7.6 Z" fill="#b2b2b2"/><circle cx="3" cy="4.9" r="1.1" fill="#fff"/><path d="M2 0.9 L7.7 0.9 L13 7.2" fill="none" stroke="#b2b2b2" stroke-width="1"/></g></svg>
<span class="t" style="left:884px;top:397px;font-size:17.6px;line-height:20px;color:#333;transform:translate(0.61px,0.85px);text-shadow:0 0 1.5px #fff;">0</span>
<span class="t" style="left:1078px;top:397px;font-size:17.6px;line-height:20px;color:#333;transform:translate(0.36px,0.85px);text-shadow:0 0 1.5px #fff;">0</span>
<span class="t" style="left:1255px;top:397px;font-size:17.6px;line-height:20px;color:#333;transform:translate(0.11px,0.85px);text-shadow:0 0 1.5px #fff;">0</span>
<span class="t" style="left:1449px;top:397px;font-size:17.6px;line-height:20px;color:#333;transform:translate(0.11px,0.85px);text-shadow:0 0 1.5px #fff;">0</span>
<span class="t" style="left:1626px;top:397px;font-size:17.6px;line-height:20px;color:#333;transform:translate(0.11px,0.85px);text-shadow:0 0 1.5px #fff;">0</span>
<span class="t" style="left:1803px;top:397px;font-size:17.6px;line-height:20px;color:#333;transform:translate(0.11px,0.85px);text-shadow:0 0 1.5px #fff;">0</span>
<svg style="left:1961px;top:402px;" width="14" height="10" viewBox="0 0 14 10"><g transform="translate(0.90 0.00)"><rect x="-1.6" y="-1.8" width="15.4" height="13.2" rx="2" fill="#fff" opacity="0.75"/><rect x="0" y="0" width="12.2" height="1.6" rx="0.6" fill="#a6a6a6"/><rect x="0" y="4" width="12.2" height="1.6" rx="0.6" fill="#a6a6a6"/><rect x="0" y="8" width="12.2" height="1.6" rx="0.6" fill="#a6a6a6"/></g></svg>
<div class="b" style="left:325px;top:440px;width:1675px;height:67px;background:#f7f7f7;"></div>
<svg style="left:338px;top:452px;" width="41" height="41" viewBox="0 0 41 41"><g transform="translate(0.75 0.20)"><circle cx="20" cy="20" r="18.8" fill="#fff" opacity="0.75"/><circle cx="20" cy="20" r="17.3" fill="#66c77a" stroke="#58c06d" stroke-width="0.8"/><path d="M20 11.2 L28 19.3 H23.7 V28.9 H16.3 V19.3 H12 Z" fill="#fff"/></g></svg>
<span class="t" style="left:393px;top:453px;font-size:17.6px;line-height:20px;color:#2e6db4;transform:translate(0.97px,0.45px);text-shadow:0 0 1.5px #fff;">Out Of Band Management loopback Interface-lo0</span>
<span class="t" style="left:393px;top:479px;font-size:13.2px;line-height:15px;color:#333;transform:translate(0.70px,0.90px) scaleX(0.9238);text-shadow:0 0 1.5px #fff;">N-PLZ-EAST-2F-YELLOW | Software Loopback</span>
<span class="t" style="left:657px;top:479px;font-size:13.2px;line-height:15px;color:#444;transform:translate(0.77px,0.70px);-webkit-text-stroke:0;">|</span>
<svg style="left:667px;top:480px;" width="15" height="14" viewBox="0 0 15 14"><g transform="translate(0.65 0.00)"><path d="M0.5 2.9 L5.6 2.4 L11.4 8.6 L6.7 13.4 L0.8 7.6 Z" fill="#b2b2b2"/><circle cx="3" cy="4.9" r="1.1" fill="#fff"/><path d="M2 0.9 L7.7 0.9 L13 7.2" fill="none" stroke="#b2b2b2" stroke-width="1"/></g></svg>
<span class="t" style="left:884px;top:464px;font-size:17.6px;line-height:20px;color:#333;transform:translate(0.61px,0.05px);text-shadow:0 0 1.5px #fff;">0</span>
<span class="t" style="left:1078px;top:464px;font-size:17.6px;line-height:20px;color:#333;transform:translate(0.36px,0.05px);text-shadow:0 0 1.5px #fff;">0</span>
<span class="t" style="left:1255px;top:464px;font-size:17.6px;line-height:20px;color:#333;transform:translate(0.11px,0.05px);text-shadow:0 0 1.5px #fff;">0</span>
<span class="t" style="left:1449px;top:464px;font-size:17.6px;line-height:20px;color:#333;transform:translate(0.11px,0.05px);text-shadow:0 0 1.5px #fff;">0</span>
<span class="t" style="left:1626px;top:464px;font-size:17.6px;line-height:20px;color:#333;transform:translate(0.11px,0.05px);text-shadow:0 0 1.5px #fff;">0</span>
<span class="t" style="left:1803px;top:464px;font-size:17.6px;line-height:20px;color:#333;transform:translate(0.11px,0.05px);text-shadow:0 0 1.5px #fff;">0</span>
<svg style="left:1961px;top:468px;" width="14" height="10" viewBox="0 0 14 10"><g transform="translate(0.90 0.20)"><rect x="-1.6" y="-1.8" width="15.4" height="13.2" rx="2" fill="#fff" opacity="0.75"/><rect x="0" y="0" width="12.2" height="1.6" rx="0.6" fill="#a6a6a6"/><rect x="0" y="4" width="12.2" height="1.6" rx="0.6" fill="#a6a6a6"/><rect x="0" y="8" width="12.2" height="1.6" rx="0.6" fill="#a6a6a6"/></g></svg>
<svg style="left:338px;top:518px;" width="41" height="41" viewBox="0 0 41 41"><g transform="translate(0.75 0.40)"><circle cx="20" cy="20" r="18.8" fill="#fff" opacity="0.75"/><circle cx="20" cy="20" r="17.3" fill="#66c77a" stroke="#58c06d" stroke-width="0.8"/><path d="M20 11.2 L28 19.3 H23.7 V28.9 H16.3 V19.3 H12 Z" fill="#fff"/></g></svg>
<span class="t" style="left:393px;top:519px;font-size:17.6px;line-height:20px;color:#2e6db4;transform:translate(0.97px,0.65px);text-shadow:0 0 1.5px #fff;">Out Of Band Management loopback Interface-lo0</span>
<span class="t" style="left:393px;top:546px;font-size:13.2px;line-height:15px;color:#333;transform:translate(0.69px,0.10px) scaleX(0.9356);text-shadow:0 0 1.5px #fff;">LKV-GF-Yellow1 | Software Loopback</span>
<span class="t" style="left:605px;top:545px;font-size:13.2px;line-height:15px;color:#444;transform:translate(0.77px,0.90px);-webkit-text-stroke:0;">|</span>
<svg style="left:615px;top:546px;" width="15" height="15" viewBox="0 0 15 15"><g transform="translate(0.65 0.20)"><path d="M0.5 2.9 L5.6 2.4 L11.4 8.6 L6.7 13.4 L0.8 7.6 Z" fill="#b2b2b2"/><circle cx="3" cy="4.9" r="1.1" fill="#fff"/><path d="M2 0.9 L7.7 0.9 L13 7.2" fill="none" stroke="#b2b2b2" stroke-width="1"/></g></svg>
<span class="t" style="left:884px;top:530px;font-size:17.6px;line-height:20px;color:#333;transform:translate(0.61px,0.25px);text-shadow:0 0 1.5px #fff;">0</span>
<span class="t" style="left:1078px;top:530px;font-size:17.6px;line-height:20px;color:#333;transform:translate(0.36px,0.25px);text-shadow:0 0 1.5px #fff;">0</span>
<span class="t" style="left:1255px;top:530px;font-size:17.6px;line-height:20px;color:#333;transform:translate(0.11px,0.25px);text-shadow:0 0 1.5px #fff;">0</span>
<span class="t" style="left:1449px;top:530px;font-size:17.6px;line-height:20px;color:#333;transform:translate(0.11px,0.25px);text-shadow:0 0 1.5px #fff;">0</span>
<span class="t" style="left:1626px;top:530px;font-size:17.6px;line-height:20px;color:#333;transform:translate(0.11px,0.25px);text-shadow:0 0 1.5px #fff;">0</span>
<span class="t" style="left:1803px;top:530px;font-size:17.6px;line-height:20px;color:#333;transform:translate(0.11px,0.25px);text-shadow:0 0 1.5px #fff;">0</span>
<svg style="left:1961px;top:534px;" width="14" height="10" viewBox="0 0 14 10"><g transform="translate(0.90 0.40)"><rect x="-1.6" y="-1.8" width="15.4" height="13.2" rx="2" fill="#fff" opacity="0.75"/><rect x="0" y="0" width="12.2" height="1.6" rx="0.6" fill="#a6a6a6"/><rect x="0" y="4" width="12.2" height="1.6" rx="0.6" fill="#a6a6a6"/><rect x="0" y="8" width="12.2" height="1.6" rx="0.6" fill="#a6a6a6"/></g></svg>
<div class="b" style="left:325px;top:573px;width:1675px;height:67px;background:#f7f7f7;"></div>
<svg style="left:338px;top:584px;" width="41" height="41" viewBox="0 0 41 41"><g transform="translate(0.75 0.60)"><circle cx="20" cy="20" r="18.8" fill="#fff" opacity="0.75"/><circle cx="20" cy="20" r="17.3" fill="#66c77a" stroke="#58c06d" stroke-width="0.8"/><path d="M20 11.2 L28 19.3 H23.7 V28.9 H16.3 V19.3 H12 Z" fill="#fff"/></g></svg>
<span class="t" style="left:393px;top:585px;font-size:17.6px;line-height:20px;color:#2e6db4;transform:translate(1.00px,0.85px) scaleX(1.0050);text-shadow:0 0 1.5px #fff;">Switch loopback interface-lo0</span>
<span class="t" style="left:393px;top:612px;font-size:13.2px;line-height:15px;color:#333;transform:translate(0.70px,0.30px) scaleX(0.9269);text-shadow:0 0 1.5px #fff;">N-PLZ-WEST-2F-YELLOW | Software Loopback</span>
<span class="t" style="left:662px;top:612px;font-size:13.2px;line-height:15px;color:#444;transform:translate(0.02px,0.10px);-webkit-text-stroke:0;">|</span>
<svg style="left:671px;top:612px;" width="15" height="15" viewBox="0 0 15 15"><g transform="translate(0.90 0.40)"><path d="M0.5 2.9 L5.6 2.4 L11.4 8.6 L6.7 13.4 L0.8 7.6 Z" fill="#b2b2b2"/><circle cx="3" cy="4.9" r="1.1" fill="#fff"/><path d="M2 0.9 L7.7 0.9 L13 7.2" fill="none" stroke="#b2b2b2" stroke-width="1"/></g></svg>
<span class="t" style="left:884px;top:596px;font-size:17.6px;line-height:20px;color:#333;transform:translate(0.33px,0.45px) scaleX(1.0955);text-shadow:0 0 1.5px #fff;">27</span>
<span class="t" style="left:1078px;top:596px;font-size:17.6px;line-height:20px;color:#333;transform:translate(0.36px,0.45px);text-shadow:0 0 1.5px #fff;">0</span>
<span class="t" style="left:1254px;top:596px;font-size:17.6px;line-height:20px;color:#333;transform:translate(0.83px,0.45px) scaleX(1.0955);text-shadow:0 0 1.5px #fff;">27</span>
<span class="t" style="left:1449px;top:596px;font-size:17.6px;line-height:20px;color:#333;transform:translate(0.11px,0.45px);text-shadow:0 0 1.5px #fff;">0</span>
<span class="t" style="left:1626px;top:596px;font-size:17.6px;line-height:20px;color:#333;transform:translate(0.11px,0.45px);text-shadow:0 0 1.5px #fff;">0</span>
<span class="t" style="left:1803px;top:596px;font-size:17.6px;line-height:20px;color:#333;transform:translate(0.11px,0.45px);text-shadow:0 0 1.5px #fff;">0</span>
<svg style="left:1961px;top:600px;" width="14" height="11" viewBox="0 0 14 11"><g transform="translate(0.90 0.60)"><rect x="-1.6" y="-1.8" width="15.4" height="13.2" rx="2" fill="#fff" opacity="0.75"/><rect x="0" y="0" width="12.2" height="1.6" rx="0.6" fill="#a6a6a6"/><rect x="0" y="4" width="12.2" height="1.6" rx="0.6" fill="#a6a6a6"/><rect x="0" y="8" width="12.2" height="1.6" rx="0.6" fill="#a6a6a6"/></g></svg>
<svg style="left:338px;top:650px;" width="41" height="41" viewBox="0 0 41 41"><g transform="translate(0.75 0.80)"><circle cx="20" cy="20" r="18.8" fill="#fff" opacity="0.75"/><circle cx="20" cy="20" r="17.3" fill="#66c77a" stroke="#58c06d" stroke-width="0.8"/><path d="M20 11.2 L28 19.3 H23.7 V28.9 H16.3 V19.3 H12 Z" fill="#fff"/></g></svg>
<span class="t" style="left:393px;top:652px;font-size:17.6px;line-height:20px;color:#2e6db4;transform:translate(1.00px,0.05px) scaleX(1.0050);text-shadow:0 0 1.5px #fff;">Switch loopback interface-lo0</span>
<span class="t" style="left:393px;top:678px;font-size:13.2px;line-height:15px;color:#333;transform:translate(0.70px,0.50px) scaleX(0.9238);text-shadow:0 0 1.5px #fff;">N-PLZ-EAST-2F-YELLOW | Software Loopback</span>
<span class="t" style="left:657px;top:678px;font-size:13.2px;line-height:15px;color:#444;transform:translate(0.77px,0.30px);-webkit-text-stroke:0;">|</span>
<svg style="left:667px;top:678px;" width="15" height="15" viewBox="0 0 15 15"><g transform="translate(0.65 0.60)"><path d="M0.5 2.9 L5.6 2.4 L11.4 8.6 L6.7 13.4 L0.8 7.6 Z" fill="#b2b2b2"/><circle cx="3" cy="4.9" r="1.1" fill="#fff"/><path d="M2 0.9 L7.7 0.9 L13 7.2" fill="none" stroke="#b2b2b2" stroke-width="1"/></g></svg>
<span class="t" style="left:884px;top:662px;font-size:17.6px;line-height:20px;color:#333;transform:translate(0.34px,0.65px) scaleX(1.0882);text-shadow:0 0 1.5px #fff;">28</span>
<span class="t" style="left:1078px;top:662px;font-size:17.6px;line-height:20px;color:#333;transform:translate(0.36px,0.65px);text-shadow:0 0 1.5px #fff;">0</span>
<span class="t" style="left:1254px;top:662px;font-size:17.6px;line-height:20px;color:#333;transform:translate(0.84px,0.65px) scaleX(1.0882);text-shadow:0 0 1.5px #fff;">28</span>
<span class="t" style="left:1449px;top:662px;font-size:17.6px;line-height:20px;color:#333;transform:translate(0.11px,0.65px);text-shadow:0 0 1.5px #fff;">0</span>
<span class="t" style="left:1626px;top:662px;font-size:17.6px;line-height:20px;color:#333;transform:translate(0.11px,0.65px);text-shadow:0 0 1.5px #fff;">0</span>
<span class="t" style="left:1803px;top:662px;font-size:17.6px;line-height:20px;color:#333;transform:translate(0.11px,0.65px);text-shadow:0 0 1.5px #fff;">0</span>
<svg style="left:1961px;top:666px;" width="14" height="11" viewBox="0 0 14 11"><g transform="translate(0.90 0.80)"><rect x="-1.6" y="-1.8" width="15.4" height="13.2" rx="2" fill="#fff" opacity="0.75"/><rect x="0" y="0" width="12.2" height="1.6" rx="0.6" fill="#a6a6a6"/><rect x="0" y="4" width="12.2" height="1.6" rx="0.6" fill="#a6a6a6"/><rect x="0" y="8" width="12.2" height="1.6" rx="0.6" fill="#a6a6a6"/></g></svg>
<div class="b" style="left:325px;top:706px;width:1675px;height:66px;background:#f7f7f7;"></div>
<svg style="left:338px;top:717px;" width="41" height="40" viewBox="0 0 41 40"><g transform="translate(0.75 0.00)"><circle cx="20" cy="20" r="18.8" fill="#fff" opacity="0.75"/><circle cx="20" cy="20" r="17.3" fill="#66c77a" stroke="#58c06d" stroke-width="0.8"/><path d="M20 11.2 L28 19.3 H23.7 V28.9 H16.3 V19.3 H12 Z" fill="#fff"/></g></svg>
<span class="t" style="left:393px;top:718px;font-size:17.6px;line-height:20px;color:#2e6db4;transform:translate(1.00px,0.25px) scaleX(1.0050);text-shadow:0 0 1.5px #fff;">Switch loopback interface-lo0</span>
<span class="t" style="left:393px;top:744px;font-size:13.2px;line-height:15px;color:#333;transform:translate(0.70px,0.70px) scaleX(0.9238);text-shadow:0 0 1.5px #fff;">N-PLZ-EAST-1F-YELLOW | Software Loopback</span>
<span class="t" style="left:657px;top:744px;font-size:13.2px;line-height:15px;color:#444;transform:translate(0.77px,0.50px);-webkit-text-stroke:0;">|</span>
<svg style="left:667px;top:744px;" width="15" height="15" viewBox="0 0 15 15"><g transform="translate(0.65 0.80)"><path d="M0.5 2.9 L5.6 2.4 L11.4 8.6 L6.7 13.4 L0.8 7.6 Z" fill="#b2b2b2"/><circle cx="3" cy="4.9" r="1.1" fill="#fff"/><path d="M2 0.9 L7.7 0.9 L13 7.2" fill="none" stroke="#b2b2b2" stroke-width="1"/></g></svg>
<span class="t" style="left:884px;top:728px;font-size:17.6px;line-height:20px;color:#333;transform:translate(0.36px,0.85px) scaleX(1.0661);text-shadow:0 0 1.5px #fff;">234</span>
<span class="t" style="left:1078px;top:728px;font-size:17.6px;line-height:20px;color:#333;transform:translate(0.36px,0.85px);text-shadow:0 0 1.5px #fff;">0</span>
<span class="t" style="left:1254px;top:728px;font-size:17.6px;line-height:20px;color:#333;transform:translate(0.85px,0.85px) scaleX(1.0783);text-shadow:0 0 1.5px #fff;">219</span>
<span class="t" style="left:1449px;top:728px;font-size:17.6px;line-height:20px;color:#333;transform:translate(0.11px,0.85px);text-shadow:0 0 1.5px #fff;">0</span>
<span class="t" style="left:1626px;top:728px;font-size:17.6px;line-height:20px;color:#333;transform:translate(0.11px,0.85px);text-shadow:0 0 1.5px #fff;">0</span>
<span class="t" style="left:1803px;top:728px;font-size:17.6px;line-height:20px;color:#333;transform:translate(0.11px,0.85px);text-shadow:0 0 1.5px #fff;">0</span>
<svg style="left:1961px;top:733px;" width="14" height="10" viewBox="0 0 14 10"><g transform="translate(0.90 0.00)"><rect x="-1.6" y="-1.8" width="15.4" height="13.2" rx="2" fill="#fff" opacity="0.75"/><rect x="0" y="0" width="12.2" height="1.6" rx="0.6" fill="#a6a6a6"/><rect x="0" y="4" width="12.2" height="1.6" rx="0.6" fill="#a6a6a6"/><rect x="0" y="8" width="12.2" height="1.6" rx="0.6" fill="#a6a6a6"/></g></svg>
<svg style="left:338px;top:783px;" width="41" height="41" viewBox="0 0 41 41"><g transform="translate(0.75 0.20)"><circle cx="20" cy="20" r="18.8" fill="#fff" opacity="0.75"/><circle cx="20" cy="20" r="17.3" fill="#66c77a" stroke="#58c06d" stroke-width="0.8"/><path d="M20 11.2 L28 19.3 H23.7 V28.9 H16.3 V19.3 H12 Z" fill="#fff"/></g></svg>
<span class="t" style="left:393px;top:784px;font-size:17.6px;line-height:20px;color:#2e6db4;transform:translate(1.00px,0.45px) scaleX(1.0050);text-shadow:0 0 1.5px #fff;">Switch loopback interface-lo0</span>
<span class="t" style="left:393px;top:810px;font-size:13.2px;line-height:15px;color:#333;transform:translate(0.69px,0.90px) scaleX(0.9356);text-shadow:0 0 1.5px #fff;">LKV-GF-Yellow1 | Software Loopback</span>
<span class="t" style="left:605px;top:810px;font-size:13.2px;line-height:15px;color:#444;transform:translate(0.77px,0.70px);-webkit-text-stroke:0;">|</span>
<svg style="left:615px;top:811px;" width="15" height="14" viewBox="0 0 15 14"><g transform="translate(0.65 0.00)"><path d="M0.5 2.9 L5.6 2.4 L11.4 8.6 L6.7 13.4 L0.8 7.6 Z" fill="#b2b2b2"/><circle cx="3" cy="4.9" r="1.1" fill="#fff"/><path d="M2 0.9 L7.7 0.9 L13 7.2" fill="none" stroke="#b2b2b2" stroke-width="1"/></g></svg>
<span class="t" style="left:884px;top:795px;font-size:17.6px;line-height:20px;color:#333;transform:translate(0.33px,0.05px) scaleX(1.0955);text-shadow:0 0 1.5px #fff;">27</span>
<span class="t" style="left:1078px;top:795px;font-size:17.6px;line-height:20px;color:#333;transform:translate(0.36px,0.05px);text-shadow:0 0 1.5px #fff;">0</span>
<span class="t" style="left:1254px;top:795px;font-size:17.6px;line-height:20px;color:#333;transform:translate(0.83px,0.05px) scaleX(1.0955);text-shadow:0 0 1.5px #fff;">27</span>
<span class="t" style="left:1449px;top:795px;font-size:17.6px;line-height:20px;color:#333;transform:translate(0.11px,0.05px);text-shadow:0 0 1.5px #fff;">0</span>
<span class="t" style="left:1626px;top:795px;font-size:17.6px;line-height:20px;color:#333;transform:translate(0.11px,0.05px);text-shadow:0 0 1.5px #fff;">0</span>
<span class="t" style="left:1803px;top:795px;font-size:17.6px;line-height:20px;color:#333;transform:translate(0.11px,0.05px);text-shadow:0 0 1.5px #fff;">0</span>
<svg style="left:1961px;top:799px;" width="14" height="10" viewBox="0 0 14 10"><g transform="translate(0.90 0.20)"><rect x="-1.6" y="-1.8" width="15.4" height="13.2" rx="2" fill="#fff" opacity="0.75"/><rect x="0" y="0" width="12.2" height="1.6" rx="0.6" fill="#a6a6a6"/><rect x="0" y="4" width="12.2" height="1.6" rx="0.6" fill="#a6a6a6"/><rect x="0" y="8" width="12.2" height="1.6" rx="0.6" fill="#a6a6a6"/></g></svg>
<div class="b" style="left:325px;top:837px;width:1675px;height:67px;background:#f7f7f7;"></div>
<svg style="left:338px;top:849px;" width="41" height="41" viewBox="0 0 41 41"><g transform="translate(0.75 0.40)"><circle cx="20" cy="20" r="18.8" fill="#fff" opacity="0.75"/><circle cx="20" cy="20" r="17.3" fill="#d85545" stroke="#d44a39" stroke-width="0.8"/><path d="M20 28.6 L28 20.3 H23.7 V10.9 H16.3 V20.3 H12 Z" fill="#fff"/></g></svg>
<span class="t" style="left:393px;top:850px;font-size:17.6px;line-height:20px;color:#2e6db4;transform:translate(1.00px,0.65px) scaleX(1.0023);text-shadow:0 0 1.5px #fff;">Switch loopback interface-lo1</span>
<span class="t" style="left:393px;top:877px;font-size:13.2px;line-height:15px;color:#333;transform:translate(0.70px,0.10px) scaleX(0.9269);text-shadow:0 0 1.5px #fff;">N-PLZ-WEST-2F-YELLOW | Software Loopback</span>
<span class="t" style="left:662px;top:876px;font-size:13.2px;line-height:15px;color:#444;transform:translate(0.02px,0.90px);-webkit-text-stroke:0;">|</span>
<svg style="left:671px;top:877px;" width="15" height="15" viewBox="0 0 15 15"><g transform="translate(0.90 0.20)"><path d="M0.5 2.9 L5.6 2.4 L11.4 8.6 L6.7 13.4 L0.8 7.6 Z" fill="#b2b2b2"/><circle cx="3" cy="4.9" r="1.1" fill="#fff"/><path d="M2 0.9 L7.7 0.9 L13 7.2" fill="none" stroke="#b2b2b2" stroke-width="1"/></g></svg>
<span class="t" style="left:884px;top:861px;font-size:17.6px;line-height:20px;color:#333;transform:translate(0.61px,0.25px);text-shadow:0 0 1.5px #fff;">0</span>
<span class="t" style="left:1078px;top:861px;font-size:17.6px;line-height:20px;color:#333;transform:translate(0.36px,0.25px);text-shadow:0 0 1.5px #fff;">0</span>
<span class="t" style="left:1255px;top:861px;font-size:17.6px;line-height:20px;color:#333;transform:translate(0.11px,0.25px);text-shadow:0 0 1.5px #fff;">0</span>
<span class="t" style="left:1449px;top:861px;font-size:17.6px;line-height:20px;color:#333;transform:translate(0.11px,0.25px);text-shadow:0 0 1.5px #fff;">0</span>
<span class="t" style="left:1626px;top:861px;font-size:17.6px;line-height:20px;color:#333;transform:translate(0.11px,0.25px);text-shadow:0 0 1.5px #fff;">0</span>
<span class="t" style="left:1803px;top:861px;font-size:17.6px;line-height:20px;color:#333;transform:translate(0.11px,0.25px);text-shadow:0 0 1.5px #fff;">0</span>
<svg style="left:1961px;top:865px;" width="14" height="10" viewBox="0 0 14 10"><g transform="translate(0.90 0.40)"><rect x="-1.6" y="-1.8" width="15.4" height="13.2" rx="2" fill="#fff" opacity="0.75"/><rect x="0" y="0" width="12.2" height="1.6" rx="0.6" fill="#a6a6a6"/><rect x="0" y="4" width="12.2" height="1.6" rx="0.6" fill="#a6a6a6"/><rect x="0" y="8" width="12.2" height="1.6" rx="0.6" fill="#a6a6a6"/></g></svg>
<svg style="left:338px;top:915px;" width="41" height="41" viewBox="0 0 41 41"><g transform="translate(0.75 0.60)"><circle cx="20" cy="20" r="18.8" fill="#fff" opacity="0.75"/><circle cx="20" cy="20" r="17.3" fill="#d85545" stroke="#d44a39" stroke-width="0.8"/><path d="M20 28.6 L28 20.3 H23.7 V10.9 H16.3 V20.3 H12 Z" fill="#fff"/></g></svg>
<span class="t" style="left:393px;top:916px;font-size:17.6px;line-height:20px;color:#2e6db4;transform:translate(1.00px,0.85px) scaleX(1.0023);text-shadow:0 0 1.5px #fff;">Switch loopback interface-lo1</span>
<span class="t" style="left:393px;top:943px;font-size:13.2px;line-height:15px;color:#333;transform:translate(0.70px,0.30px) scaleX(0.9238);text-shadow:0 0 1.5px #fff;">N-PLZ-EAST-2F-YELLOW | Software Loopback</span>
<span class="t" style="left:657px;top:943px;font-size:13.2px;line-height:15px;color:#444;transform:translate(0.77px,0.10px);-webkit-text-stroke:0;">|</span>
<svg style="left:667px;top:943px;" width="15" height="15" viewBox="0 0 15 15"><g transform="translate(0.65 0.40)"><path d="M0.5 2.9 L5.6 2.4 L11.4 8.6 L6.7 13.4 L0.8 7.6 Z" fill="#b2b2b2"/><circle cx="3" cy="4.9" r="1.1" fill="#fff"/><path d="M2 0.9 L7.7 0.9 L13 7.2" fill="none" stroke="#b2b2b2" stroke-width="1"/></g></svg>
<span class="t" style="left:884px;top:927px;font-size:17.6px;line-height:20px;color:#333;transform:translate(0.61px,0.45px);text-shadow:0 0 1.5px #fff;">0</span>
<span class="t" style="left:1078px;top:927px;font-size:17.6px;line-height:20px;color:#333;transform:translate(0.36px,0.45px);text-shadow:0 0 1.5px #fff;">0</span>
<span class="t" style="left:1255px;top:927px;font-size:17.6px;line-height:20px;color:#333;transform:translate(0.11px,0.45px);text-shadow:0 0 1.5px #fff;">0</span>
<span class="t" style="left:1449px;top:927px;font-size:17.6px;line-height:20px;color:#333;transform:translate(0.11px,0.45px);text-shadow:0 0 1.5px #fff;">0</span>
<span class="t" style="left:1626px;top:927px;font-size:17.6px;line-height:20px;color:#333;transform:translate(0.11px,0.45px);text-shadow:0 0 1.5px #fff;">0</span>
<span class="t" style="left:1803px;top:927px;font-size:17.6px;line-height:20px;color:#333;transform:translate(0.11px,0.45px);text-shadow:0 0 1.5px #fff;">0</span>
<svg style="left:1961px;top:931px;" width="14" height="11" viewBox="0 0 14 11"><g transform="translate(0.90 0.60)"><rect x="-1.6" y="-1.8" width="15.4" height="13.2" rx="2" fill="#fff" opacity="0.75"/><rect x="0" y="0" width="12.2" height="1.6" rx="0.6" fill="#a6a6a6"/><rect x="0" y="4" width="12.2" height="1.6" rx="0.6" fill="#a6a6a6"/><rect x="0" y="8" width="12.2" height="1.6" rx="0.6" fill="#a6a6a6"/></g></svg>
<div class="b" style="left:324.5px;top:952.5px;width:1675.5px;height:7.5px;background:#fff;"></div>
</body></html>
